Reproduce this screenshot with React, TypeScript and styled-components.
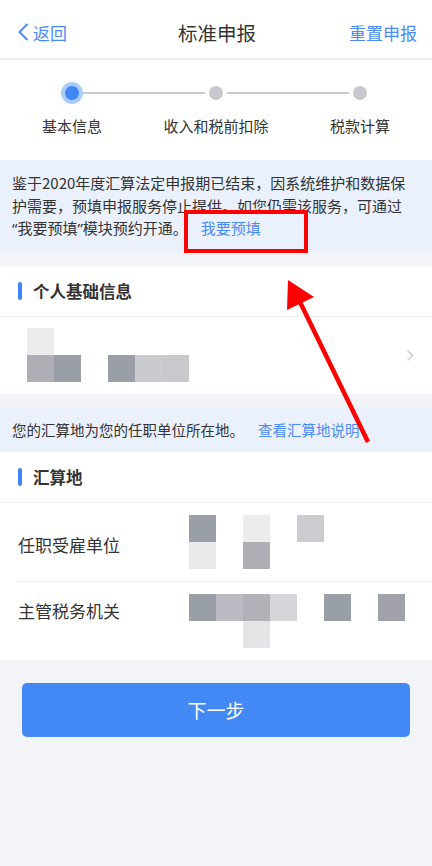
import React from 'react';
import styled, { createGlobalStyle } from 'styled-components';

const GlobalStyle = createGlobalStyle`
  body {
    margin: 0;
    background: #f3f4f8;
    font-family: "Noto Sans CJK SC", "Noto Sans", sans-serif;
    color: #333333;
  }
`;

type Cell = string | null;

const personalCells: Cell[][] = [
  ['#ececec', null, null, null, null, null],
  ['#adafb5', '#9a9ea6', null, '#9a9ea6', '#cacbcf', '#c8c9cd'],
];

const unitCells: Cell[][] = [
  ['#9a9ea6', null, '#ececec', null, '#cbcccf'],
  ['#e9e9ea', null, '#adafb5', null, null],
];

const officeCells: Cell[][] = [
  ['#9a9ea6', '#babbc0', '#b0b2b7', '#d5d6d9', null, '#9a9ea6', null, '#9fa2a9'],
  [null, null, '#e4e4e6', null, null, null, null, null],
];

const Mosaic = ({ cells }: { cells: Cell[][] }) => (
  <Grid $cols={cells[0].length}>
    {cells.flatMap((row, r) =>
      row.map((c, i) => <Pixel key={`${r}-${i}`} $color={c} />)
    )}
  </Grid>
);

const App = () => {
  return (
    <Page>
      <GlobalStyle />
      <Header>
        <Back>
          <svg width="12" height="18" viewBox="0 0 12 18">
            <polyline points="10,1.5 2.5,9 10,16.5" fill="none" stroke="#4b8bf5" strokeWidth="2" strokeLinecap="round" strokeLinejoin="round" />
          </svg>
          返回
        </Back>
        <Title>标准申报</Title>
        <HeaderAction>重置申报</HeaderAction>
      </Header>

      <Steps>
        <Track>
          <Dot $active />
          <Line />
          <Dot />
          <Line />
          <Dot />
        </Track>
        <StepLabels>
          <span>基本信息</span>
          <span>收入和税前扣除</span>
          <span>税款计算</span>
        </StepLabels>
      </Steps>

      <Notice>
        鉴于2020年度汇算法定申报期已结束，因系统维护和数据保<br />
        护需要，预填申报服务停止提供。如您仍需该服务，可通过<br />
        <Quote>“</Quote>我要预填<Quote>”</Quote>模块预约开通。<NoticeLink>我要预填</NoticeLink>
      </Notice>

      <Section>
        <SectionHead>个人基础信息</SectionHead>
        <PersonRow>
          <Mosaic cells={personalCells} />
          <svg width="8" height="13" viewBox="0 0 8 13">
            <polyline points="1.5,1.5 6.5,6.5 1.5,11.5" fill="none" stroke="#d0d0d4" strokeWidth="1.6" />
          </svg>
        </PersonRow>
      </Section>

      <Tip>
        您的汇算地为您的任职单位所在地。<TipLink>查看汇算地说明</TipLink>
      </Tip>

      <Section>
        <SectionHead>汇算地</SectionHead>
        <FieldRow>
          <FieldLabel>任职受雇单位</FieldLabel>
          <Mosaic cells={unitCells} />
        </FieldRow>
        <FieldRow $top>
          <FieldLabel $top>主管税务机关</FieldLabel>
          <Mosaic cells={officeCells} />
        </FieldRow>
      </Section>

      <NextButton>下一步</NextButton>

      <Annotation width="432" height="866" viewBox="0 0 432 866">
        <rect x="186" y="212" width="120" height="39" fill="none" stroke="#ff0000" strokeWidth="4" />
        <line x1="368" y1="442" x2="300" y2="302" stroke="#ff0000" strokeWidth="4.5" />
        <polygon points="288,280 314,297 287,310" fill="#ff0000" />
      </Annotation>
    </Page>
  );
};

export default App;

const Page = styled.div`
  position: relative;
  width: 432px;
  min-height: 866px;
  background: #f3f4f8;
  overflow: hidden;
`;

const Header = styled.div`
  height: 58px;
  background: #ffffff;
  border-bottom: 2px solid #ededed;
  display: grid;
  grid-template-columns: 1fr auto 1fr;
  align-items: center;
  padding: 0 15px 0 17px;
`;

const Back = styled.div`
  display: flex;
  align-items: center;
  gap: 4px;
  color: #4b8bf5;
  font-size: 17px;
  padding-top: 6px;
`;

const Title = styled.div`
  font-size: 19.5px;
  color: #333333;
  padding-top: 6px;
`;

const HeaderAction = styled.div`
  justify-self: end;
  color: #4b8bf5;
  font-size: 17px;
  padding-top: 6px;
`;

const Steps = styled.div`
  background: #ffffff;
  padding: 22px 0 24px;
`;

const Track = styled.div`
  display: flex;
  align-items: center;
  padding: 0 61px;
`;

const Dot = styled.div<{ $active?: boolean }>`
  flex: none;
  box-sizing: border-box;
  width: 22px;
  height: 22px;
  border-radius: 50%;
  background: ${(p) => (p.$active ? '#3f87f5' : '#c8c9d1')};
  border: ${(p) => (p.$active ? '4px solid #a9cdfb' : '4px solid #ffffff')};
`;

const Line = styled.div`
  flex: 1;
  height: 1.5px;
  background: #c8c9cf;
`;

const StepLabels = styled.div`
  display: grid;
  grid-template-columns: repeat(3, 144px);
  justify-items: center;
  margin-top: 12px;
  font-size: 15px;
  line-height: 20px;
  color: #333333;
`;

const Notice = styled.div`
  background: #eaf1fc;
  padding: 12px 12px;
  font-size: 15px;
  line-height: 22.5px;
  color: #333333;
  white-space: nowrap;
  margin-bottom: 14px;
`;

const Quote = styled.span`
  font-family: "Noto Sans", sans-serif;
`;

const NoticeLink = styled.span`
  color: #4b8bf5;
  margin-left: 13px;
`;

const Section = styled.div`
  background: #ffffff;
`;

const SectionHead = styled.div`
  display: flex;
  align-items: center;
  height: 50px;
  padding-left: 18px;
  font-size: 16.5px;
  font-weight: 700;
  color: #333333;
  border-bottom: 1px solid #efeff1;
  &::before {
    content: '';
    width: 4px;
    height: 18px;
    border-radius: 2px;
    background: #3f87f5;
    margin-right: 11px;
  }
`;

const PersonRow = styled.div`
  height: 77px;
  display: flex;
  align-items: center;
  justify-content: space-between;
  padding: 0 18px 0 27px;
`;

const Grid = styled.div<{ $cols: number }>`
  display: grid;
  grid-template-columns: repeat(${(p) => p.$cols}, 27px);
  grid-auto-rows: 27px;
`;

const Pixel = styled.div<{ $color: Cell }>`
  background: ${(p) => p.$color ?? 'transparent'};
`;

const Tip = styled.div`
  margin: 13px 0 0;
  height: 45px;
  display: flex;
  align-items: center;
  padding: 0 12px;
  background: #eaf1fc;
  font-size: 14.5px;
  color: #333333;
`;

const TipLink = styled.span`
  color: #4b8bf5;
  margin-left: 14px;
`;

const FieldRow = styled.div<{ $top?: boolean }>`
  display: flex;
  align-items: ${(p) => (p.$top ? 'flex-start' : 'center')};
  margin-left: 18px;
  padding: 12px 0 12px;
  & + & {
    border-top: 1px solid #efeff1;
  }
`;

const FieldLabel = styled.div<{ $top?: boolean }>`
  width: 171px;
  font-size: 17px;
  line-height: 24px;
  color: #333333;
  padding-top: ${(p) => (p.$top ? '5px' : '6px')};
`;

const NextButton = styled.button`
  display: block;
  box-sizing: border-box;
  width: 388px;
  height: 54px;
  margin: 23px 22px 0;
  border: none;
  border-radius: 5px;
  background: #4289f5;
  color: #ffffff;
  font-family: "Noto Sans CJK SC", sans-serif;
  font-size: 19px;
`;

const Annotation = styled.svg`
  position: absolute;
  left: 0;
  top: 0;
  pointer-events: none;
`;
